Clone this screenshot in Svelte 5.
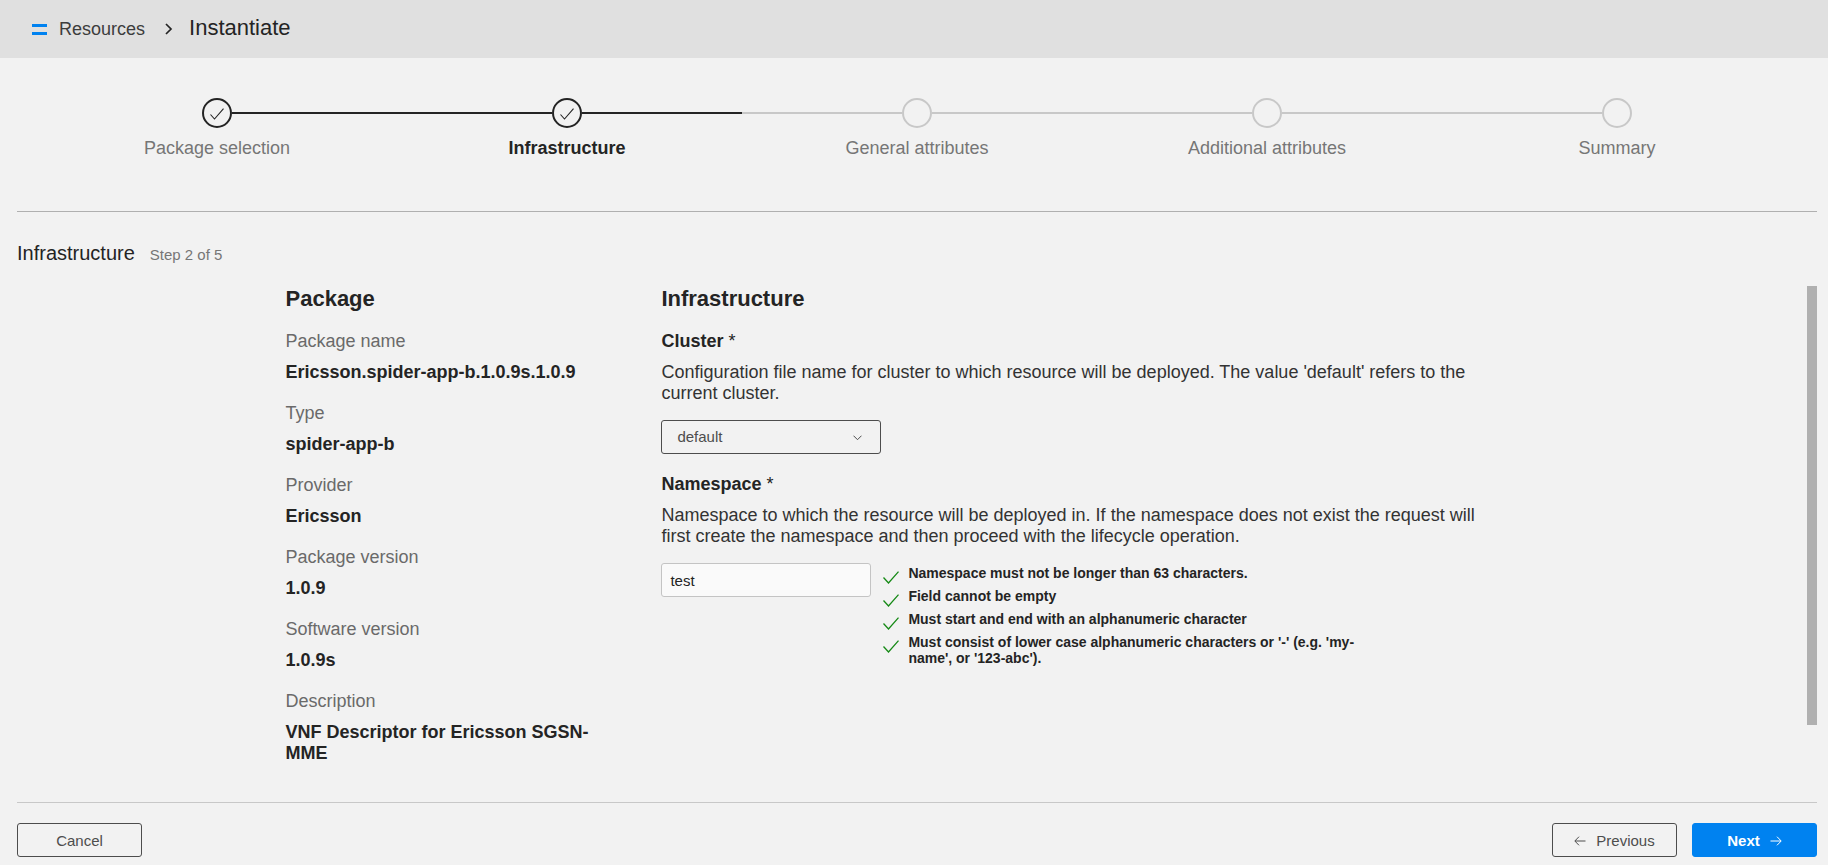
<script>
  const steps = [
    { name: 'Package selection', done: true },
    { name: 'Infrastructure', done: true, current: true },
    { name: 'General attributes' },
    { name: 'Additional attributes' },
    { name: 'Summary' }
  ];

  const details = [
    ['Package name', 'Ericsson.spider-app-b.1.0.9s.1.0.9'],
    ['Type', 'spider-app-b'],
    ['Provider', 'Ericsson'],
    ['Package version', '1.0.9'],
    ['Software version', '1.0.9s'],
    ['Description', 'VNF Descriptor for Ericsson SGSN-MME']
  ];

  const rules = [
    'Namespace must not be longer than 63 characters.',
    'Field cannot be empty',
    'Must start and end with an alphanumeric character',
    "Must consist of lower case alphanumeric characters or '-' (e.g. 'my-name', or '123-abc')."
  ];

  let cluster = $state('default');
  let namespace = $state('test');
</script>

<div class="page">
  <header>
    <svg class="menu" width="15" height="11" viewBox="0 0 15 11" aria-hidden="true">
      <path d="M0 0h15v3H0zM0 8h15v3H0z" fill="#0082f0" />
    </svg>
    <a href="#resources">Resources</a>
    <svg width="8" height="12" viewBox="0 0 8 12" aria-hidden="true">
      <path d="M1 1l5 5-5 5" fill="none" stroke="#242424" stroke-width="1.7" />
    </svg>
    <h1>Instantiate</h1>
  </header>

  <main>
    <ol class="stepper">
      {#each steps as step}
        <li class:done={step.done} class:current={step.current}>
          <span class="track">
            <span class="line before"></span>
            <span class="circle">
              {#if step.done}
                <svg width="14" height="12" viewBox="0 0 14 12" aria-hidden="true">
                  <path d="M.5 6.5l4 4.5L13.5.7" fill="none" stroke="#242424" stroke-width="1.1" />
                </svg>
              {/if}
            </span>
            <span class="line after"></span>
          </span>
          <span>{step.name}</span>
        </li>
      {/each}
    </ol>

    <div class="title">
      <h2>Infrastructure</h2>
      <span>Step 2 of 5</span>
    </div>

    <div class="scroll">
      <div class="content">
        <section class="package">
          <h3>Package</h3>
          <dl>
            {#each details as [term, value]}
              <div>
                <dt>{term}</dt>
                <dd>{value}</dd>
              </div>
            {/each}
          </dl>
        </section>

        <section>
          <h3>Infrastructure</h3>
          <div class="field">
            <label for="cluster"><b>Cluster</b> *</label>
            <p>
              Configuration file name for cluster to which resource will be deployed. The value
              'default' refers to the current cluster.
            </p>
            <div class="select">
              <select id="cluster" bind:value={cluster}>
                <option value="default">default</option>
              </select>
              <svg width="9" height="6" viewBox="0 0 9 6" aria-hidden="true">
                <path d="M.5.7l4 4 4-4" fill="none" stroke="#4d4d4d" />
              </svg>
            </div>
          </div>
          <div class="field">
            <label for="namespace"><b>Namespace</b> *</label>
            <p>
              Namespace to which the resource will be deployed in. If the namespace does not exist
              the request will first create the namespace and then proceed with the lifecycle
              operation.
            </p>
            <div class="row">
              <input id="namespace" type="text" bind:value={namespace} />
              <ul>
                {#each rules as rule}
                  <li>
                    <svg width="16" height="13" viewBox="0 0 16 13" aria-hidden="true">
                      <path d="M.5 6.5l5 5.500L15.5.6" fill="none" stroke="#168a16" stroke-width="1.3" />
                    </svg>
                    <span>{rule}</span>
                  </li>
                {/each}
              </ul>
            </div>
          </div>
        </section>
      </div>
      <div class="scrollbar"><div class="thumb"></div></div>
    </div>
  </main>

  <footer>
    <button type="button">Cancel</button>
    <div class="nav">
      <button type="button">
        <svg width="12" height="10" viewBox="0 0 12 10" aria-hidden="true">
          <path d="M11.5 5H1M5 .7L.8 5 5 9.3" fill="none" stroke="currentColor" />
        </svg>
        Previous
      </button>
      <button type="button" class="primary">
        Next
        <svg width="12" height="10" viewBox="0 0 12 10" aria-hidden="true">
          <path d="M.5 5H11M7 .7L11.2 5 7 9.3" fill="none" stroke="currentColor" />
        </svg>
      </button>
    </div>
  </footer>
</div>

<style>
  :global(body) {
    margin: 0;
    background: #f2f2f2;
  }

  .page {
    display: flex;
    flex-direction: column;
    min-height: 100vh;
    box-sizing: border-box;
    color: #242424;
    font: 18px/21px Arial, 'Liberation Sans', sans-serif;
  }

  h1, h2, h3, p, ol, ul, dl, dd {
    margin: 0;
    padding: 0;
    list-style: none;
  }

  svg {
    display: block;
    flex: none;
  }

  header {
    display: flex;
    align-items: center;
    height: 58px;
    padding: 0 32px;
    background: #e0e0e0;
  }

  header a {
    margin: 0 20px 0 12px;
    color: #3c3c3c;
    text-decoration: none;
  }

  h1 {
    margin-left: 16px;
    padding-bottom: 2px;
    font-size: 22px;
    font-weight: 400;
    line-height: 26px;
  }

  main {
    display: flex;
    flex: 1;
    flex-direction: column;
    margin: 0 11px 0 17px;
  }

  .stepper {
    display: flex;
    padding: 40px 25px 52px;
    border-bottom: 1px solid #b0b0b0;
  }

  .stepper li {
    display: flex;
    flex: 1;
    flex-direction: column;
    gap: 10px;
    color: #767676;
    text-align: center;
  }

  .track {
    display: flex;
    align-items: center;
  }

  .line {
    flex: 1;
    height: 2px;
    background: #c8c8c8;
  }

  .done .line {
    background: #242424;
  }

  li:first-child .before,
  li:last-child .after {
    background: none;
  }

  .circle {
    display: flex;
    align-items: center;
    justify-content: center;
    box-sizing: border-box;
    width: 30px;
    height: 30px;
    padding: 2px 1px 0 0;
    border: 2px solid #c8c8c8;
    border-radius: 50%;
  }

  .done .circle {
    border-color: #242424;
  }

  .stepper .current {
    color: #242424;
    font-weight: 700;
  }

  .title {
    display: flex;
    align-items: baseline;
    gap: 15px;
    padding: 29px 0 19px;
    line-height: 24px;
  }

  h2 {
    font-size: 20px;
    font-weight: 400;
  }

  .title span {
    color: #767676;
    font-size: 15px;
  }

  .scroll {
    display: flex;
    flex: 1;
    align-items: stretch;
  }

  .content {
    display: grid;
    flex: 1;
    grid-template-columns: 15fr 21fr 49fr 15fr;
    padding-bottom: 36px;
  }

  section {
    padding-right: 45px;
  }

  .package {
    grid-column: 2;
  }

  h3 {
    margin-bottom: 19px;
    font-size: 22px;
    line-height: 26px;
  }

  dl {
    display: grid;
    gap: 20px;
  }

  dt {
    margin-bottom: 10px;
    color: #6a6a6a;
  }

  dd {
    font-weight: 700;
  }

  .field + .field {
    margin-top: 20px;
  }

  label {
    display: block;
    margin-bottom: 10px;
  }

  p {
    margin-bottom: 16px;
    color: #333;
  }

  .select {
    position: relative;
    width: 220px;
  }

  .select svg {
    position: absolute;
    top: 15px;
    right: 19px;
    pointer-events: none;
  }

  select,
  input,
  button {
    box-sizing: border-box;
    height: 34px;
    border: 1px solid #4d4d4d;
    border-radius: 3px;
    background: transparent;
    color: #4d4d4d;
    font: 15px/18px Arial, 'Liberation Sans', sans-serif;
  }

  select {
    display: block;
    width: 100%;
    padding: 0 15px;
    appearance: none;
  }

  .row {
    display: flex;
    align-items: flex-start;
    gap: 12px;
  }

  input {
    flex: none;
    width: 210px;
    padding: 0 8px;
    border-color: #c4c4c4;
    background: #fafafa;
    color: #242424;
  }

  ul {
    display: grid;
    gap: 7px;
    max-width: 500px;
    padding-top: 2px;
    font-size: 14px;
    font-weight: 700;
    line-height: 16px;
  }

  ul li {
    display: flex;
    gap: 9px;
  }

  ul svg {
    margin-top: 6px;
    margin-bottom: -3px;
  }

  .scrollbar {
    width: 10px;
  }

  .thumb {
    height: 85%;
    background: #b0b0b0;
  }

  footer {
    display: flex;
    justify-content: space-between;
    margin: 0 11px 0 17px;
    padding: 20px 0 8px;
    border-top: 1px solid #c8c8c8;
  }

  .nav {
    display: flex;
    gap: 15px;
  }

  button {
    display: flex;
    align-items: center;
    justify-content: center;
    gap: 10px;
    width: 125px;
    padding: 2px 0 0;
    cursor: pointer;
  }

  .primary {
    border-color: #0082f0;
    background: #0082f0;
    color: #fff;
    font-weight: 700;
  }
</style>
